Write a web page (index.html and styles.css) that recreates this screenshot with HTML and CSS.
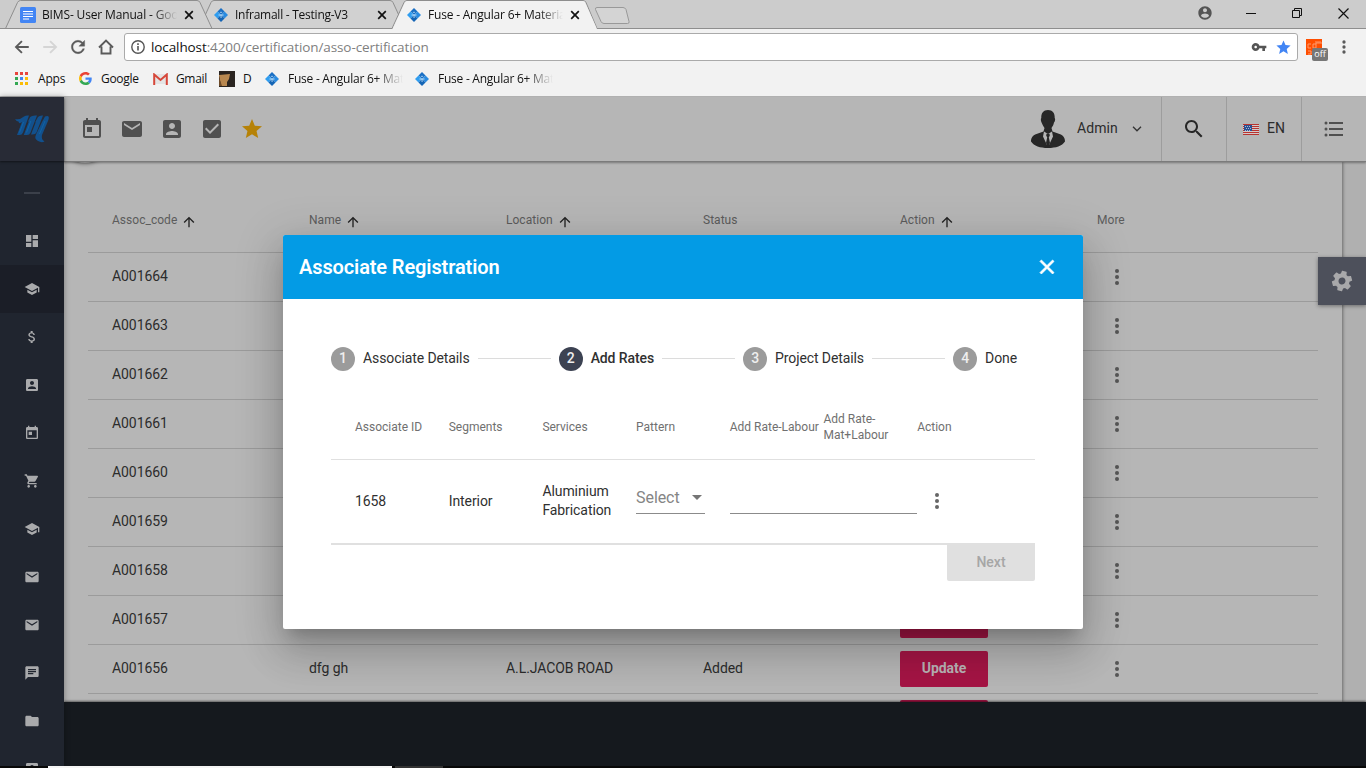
FILE: index.html
```html
<!DOCTYPE html>
<html lang="en">
<head>
<meta charset="utf-8">
<title>Fuse - Angular 6+ Material</title>
<link rel="stylesheet" href="styles.css">
</head>
<body>
<svg class="defs" width="0" height="0">
  <symbol id="today" viewBox="0 0 24 24"><path d="M19 3h-1V1h-2v2H8V1H6v2H5c-1.11 0-1.99.9-1.99 2L3 19c0 1.1.89 2 2 2h14c1.1 0 2-.9 2-2V5c0-1.1-.9-2-2-2zm0 16H5V8h14v11zM7 10h5v5H7z"/></symbol>
  <symbol id="mail" viewBox="0 0 24 24"><path d="M20 4H4c-1.1 0-1.99.9-1.99 2L2 18c0 1.1.9 2 2 2h16c1.1 0 2-.9 2-2V6c0-1.1-.9-2-2-2zm0 4l-8 5-8-5V6l8 5 8-5v2z"/></symbol>
  <symbol id="account" viewBox="0 0 24 24"><path d="M3 5v14c0 1.1.89 2 2 2h14c1.1 0 2-.9 2-2V5c0-1.1-.9-2-2-2H5c-1.11 0-2 .9-2 2zm12 4c0 1.66-1.34 3-3 3s-3-1.34-3-3 1.34-3 3-3 3 1.34 3 3zm-9 8c0-2 4-3.1 6-3.1s6 1.1 6 3.1v1H6v-1z"/></symbol>
  <symbol id="check" viewBox="0 0 24 24"><path d="M19 3H5c-1.11 0-2 .9-2 2v14c0 1.1.89 2 2 2h14c1.11 0 2-.9 2-2V5c0-1.1-.89-2-2-2zm-9 14l-5-5 1.41-1.41L10 14.17l7.59-7.59L19 8l-9 9z"/></symbol>
  <symbol id="star" viewBox="0 0 24 24"><path d="M12 17.27L18.18 21l-1.64-7.03L22 9.24l-7.19-.61L12 2 9.19 8.63 2 9.24l5.46 4.73L5.82 21z"/></symbol>
  <symbol id="search" viewBox="0 0 24 24"><path d="M15.5 14h-.79l-.28-.27C15.41 12.59 16 11.11 16 9.5 16 5.91 13.09 3 9.5 3S3 5.91 3 9.5 5.91 16 9.5 16c1.61 0 3.09-.59 4.23-1.57l.27.28v.79l5 4.99L20.49 19l-4.99-5zm-6 0C7.01 14 5 11.99 5 9.5S7.01 5 9.5 5 14 7.01 14 9.5 11.99 14 9.5 14z"/></symbol>
  <symbol id="list" viewBox="0 0 24 24"><circle cx="4" cy="6" r="1.5"/><circle cx="4" cy="12" r="1.5"/><circle cx="4" cy="18" r="1.5"/><path d="M7 5h14v2H7zM7 11h14v2H7zM7 17h14v2H7z"/></symbol>
  <symbol id="gear" viewBox="0 0 24 24"><path d="M19.43 12.98c.04-.32.07-.64.07-.98s-.03-.66-.07-.98l2.11-1.65c.19-.15.24-.42.12-.64l-2-3.46c-.12-.22-.39-.3-.61-.22l-2.49 1c-.52-.4-1.08-.73-1.69-.98l-.38-2.65C14.46 2.18 14.25 2 14 2h-4c-.25 0-.46.18-.49.42l-.38 2.65c-.61.25-1.17.59-1.69.98l-2.49-1c-.23-.09-.49 0-.61.22l-2 3.46c-.13.22-.07.49.12.64l2.11 1.65c-.04.32-.07.65-.07.98s.03.66.07.98l-2.11 1.65c-.19.15-.24.42-.12.64l2 3.46c.12.22.39.3.61.22l2.49-1c.52.4 1.08.73 1.69.98l.38 2.65c.03.24.24.42.49.42h4c.25 0 .46-.18.49-.42l.38-2.65c.61-.25 1.17-.59 1.69-.98l2.49 1c.23.09.49 0 .61-.22l2-3.46c.12-.22.07-.49-.12-.64l-2.11-1.65zM12 15.5c-1.93 0-3.5-1.57-3.5-3.5s1.57-3.5 3.5-3.5 3.5 1.57 3.5 3.5-1.57 3.5-3.5 3.5z"/></symbol>
  <symbol id="dash" viewBox="0 0 24 24"><path d="M3 13h8V3H3v10zm0 8h8v-6H3v6zm10 0h8V11h-8v10zm0-18v6h8V3h-8z"/></symbol>
  <symbol id="school" viewBox="0 0 24 24"><path d="M5 13.18v4L12 21l7-3.82v-4L12 17l-7-3.82zM12 3L1 9l11 6 9-4.91V17h2V9L12 3z"/></symbol>
  <symbol id="money" viewBox="0 0 24 24"><path d="M11.8 10.9c-2.27-.59-3-1.2-3-2.15 0-1.09 1.01-1.85 2.7-1.85 1.78 0 2.44.85 2.5 2.1h2.21c-.07-1.72-1.12-3.3-3.21-3.81V3h-3v2.16c-1.94.42-3.5 1.68-3.5 3.61 0 2.31 1.91 3.46 4.7 4.13 2.5.6 3 1.48 3 2.41 0 .69-.49 1.79-2.7 1.79-2.06 0-2.87-.92-2.98-2.1h-2.2c.12 2.19 1.76 3.42 3.68 3.83V21h3v-2.15c1.95-.37 3.5-1.5 3.5-3.55 0-2.84-2.43-3.81-4.7-4.4z"/></symbol>
  <symbol id="cart" viewBox="0 0 24 24"><path d="M7 18c-1.1 0-1.99.9-1.99 2S5.9 22 7 22s2-.9 2-2-.9-2-2-2zM1 2v2h2l3.6 7.59-1.35 2.45c-.16.28-.25.61-.25.96 0 1.1.9 2 2 2h12v-2H7.42c-.14 0-.25-.11-.25-.25l.03-.12.9-1.63h7.45c.75 0 1.41-.41 1.75-1.03l3.58-6.49c.08-.14.12-.31.12-.48 0-.55-.45-1-1-1H5.21l-.94-2H1zm16 16c-1.1 0-1.99.9-1.99 2s.89 2 1.99 2 2-.9 2-2-.9-2-2-2z"/></symbol>
  <symbol id="chat" viewBox="0 0 24 24"><path d="M20 2H4c-1.1 0-1.99.9-1.99 2L2 22l4-4h14c1.1 0 2-.9 2-2V4c0-1.1-.9-2-2-2zM6 9h12v2H6V9zm8 5H6v-2h8v2zm4-6H6V6h12v2z"/></symbol>
  <symbol id="folder" viewBox="0 0 24 24"><path d="M10 4H4c-1.1 0-1.99.9-1.99 2L2 18c0 1.1.9 2 2 2h16c1.1 0 2-.9 2-2V8c0-1.1-.9-2-2-2h-8l-2-2z"/></symbol>
  <symbol id="up" viewBox="0 0 24 24"><path d="M4 12l1.41 1.41L11 7.83V20h2V7.83l5.58 5.59L20 12l-8-8-8 8z"/></symbol>
  <symbol id="close" viewBox="0 0 24 24"><path d="M19 6.41L17.59 5 12 10.59 6.41 5 5 6.41 10.59 12 5 17.59 6.41 19 12 13.41 17.59 19 19 17.59 13.41 12z"/></symbol>
  <symbol id="dots" viewBox="0 0 24 24"><circle cx="12" cy="6" r="2"/><circle cx="12" cy="12" r="2"/><circle cx="12" cy="18" r="2"/></symbol>
  <symbol id="key" viewBox="0 0 24 24"><path d="M12.65 10C11.83 7.67 9.61 6 7 6c-3.31 0-6 2.69-6 6s2.69 6 6 6c2.61 0 4.83-1.67 5.65-4H17v4h4v-4h2v-4H12.65zM7 14c-1.1 0-2-.9-2-2s.9-2 2-2 2 .9 2 2-.9 2-2 2z"/></symbol>
  <symbol id="person" viewBox="0 0 24 24"><path d="M12 2C6.48 2 2 6.48 2 12s4.48 10 10 10 10-4.48 10-10S17.52 2 12 2zm0 3c1.66 0 3 1.34 3 3s-1.34 3-3 3-3-1.34-3-3 1.34-3 3-3zm0 14.2c-2.5 0-4.71-1.28-6-3.22.03-1.99 4-3.08 6-3.08 1.99 0 5.97 1.09 6 3.08-1.29 1.94-3.5 3.22-6 3.22z"/></symbol>
  <symbol id="back" viewBox="0 0 24 24"><path d="M21 10.8H7L12.8 5 11 3.200 2.200 12 11 20.800 12.800 19 7 13.200H21z"/></symbol>
  <symbol id="reload" viewBox="0 0 24 24"><path d="M17.65 6.35C16.2 4.9 14.21 4 12 4c-4.42 0-7.99 3.58-7.99 8s3.57 8 7.99 8c3.73 0 6.84-2.55 7.73-6h-2.080c-.82 2.330-3.040 4-5.650 4-3.310 0-6-2.690-6-6s2.690-6 6-6c1.660 0 3.140.69 4.220 1.780L13 11h7V4l-2.350 2.350z"/></symbol>
  <symbol id="fuse" viewBox="0 0 14 14"><path fill="#1a6fc4" d="M7 0l3.500 3.500L7 7 3.500 3.500z"/><path fill="#2f9df0" d="M3.500 3.500L7 7l-3.500 3.500L0 7z"/><path fill="#2a8be0" d="M10.500 3.500L14 7l-3.500 3.500L7 7z"/><path fill="#1565b5" d="M7 7l3.500 3.500L7 14l-3.500-3.500z"/><path fill="#b9dcf7" d="M7 3.400l1.400 1.400H5.600zM4.500 6.500h5v.9h-5zM6.600 7.400h.9v2.600h-.9z"/></symbol>
  <symbol id="xs" viewBox="0 0 10 10"><path d="M1.200 1.200l7.600 7.600M8.800 1.200L1.200 8.800" fill="none" stroke="#111" stroke-width="1.700"/></symbol>
</svg>

<header class="browser">
  <div class="tabstrip">
    <svg class="tab-shapes" width="640" height="29">
      <path d="M199 28.500L211 2.500Q212 .5 214 .5H390Q392 .5 393 2.500L405 28.500" fill="#d1d1d1" stroke="#8e8e8e"/>
      <path d="M5.500 28.500L17.500 2.500Q18.500 .5 20.500 .5H197Q199 .5 200 2.500L212 28.500" fill="#d1d1d1" stroke="#8e8e8e"/>
      <path d="M0 28.500H392L404 2.500Q405 .5 407 .5H583Q585 .5 586 2.500L597 28.500H640" fill="none" stroke="#8e8e8e"/>
      <path d="M392.500 29L404.500 3Q405.500 1 407 1H583Q585 1 585.500 3L597 29z" fill="#f2f2f2"/>
      <path d="M597 7.500H623Q625 7.500 626 9.500L629 21.500Q629.500 23.500 627.500 23.500H604Q602 23.500 601 21.500L595.500 9.500Q595 7.500 597 7.500z" fill="#d4d4d4" stroke="#999"/>
    </svg>
    <div class="tabs">
      <div class="tab">
        <svg class="favicon" width="16" height="16"><rect width="16" height="16" rx="1.500" fill="#4285f4"/><path d="M3 4.500h10M3 7h10M3 9.500h10M3 12h6" stroke="#fff" stroke-width="1.200"/></svg>
        <span class="tab-title t1">BIMS- User Manual - Google</span><svg class="x"><use href="#xs"/></svg>
      </div>
      <div class="tab">
        <svg class="favicon fuse"><use href="#fuse"/></svg>
        <span class="tab-title t2">Inframall - Testing-V3</span><svg class="x"><use href="#xs"/></svg>
      </div>
      <div class="tab">
        <svg class="favicon fuse"><use href="#fuse"/></svg>
        <span class="tab-title t3">Fuse - Angular 6+ Material</span><svg class="x"><use href="#xs"/></svg>
      </div>
    </div>
    <div class="window-buttons">
      <svg class="profile"><use href="#person"/></svg>
      <svg width="10" height="10"><path d="M0 5.500h10" stroke="#111"/></svg>
      <svg width="10" height="10" fill="none" stroke="#111"><path d="M.5 2.500h7v7h-7zM2.500 2.500V.5h7v7h-2"/></svg>
      <svg width="11" height="11"><path d="M.5.5l10 10M10.500.5l-10 10" stroke="#111" stroke-width="1.200"/></svg>
    </div>
  </div>
  <div class="navbar">
    <svg class="nav-icon"><use href="#back"/></svg>
    <svg class="nav-icon forward"><use href="#back"/></svg>
    <svg class="nav-icon reload"><use href="#reload"/></svg>
    <svg class="home" width="16" height="16" viewBox="0 0 16 16"><path d="M1 8.500L8 1.500l7 7M3.500 7.500v7h9v-7" fill="none" stroke="#5a5a5a" stroke-width="1.900"/></svg>
    <div class="omnibox">
      <svg width="14" height="14"><circle cx="7" cy="7" r="6.200" fill="none" stroke="#555" stroke-width="1.400"/><path d="M7 6v4.500M7 3.300v1.600" stroke="#555" stroke-width="1.600"/></svg>
      <span class="url"><b>localhost</b>:4200/certification/asso-certification</span>
      <svg class="key"><use href="#key"/></svg>
      <svg class="bookmark-star"><use href="#star"/></svg>
    </div>
    <div class="extension">
      <svg width="16" height="16"><rect width="16" height="16" fill="#ff4e00"/><path d="M5 5H2v4h3M10 5H7v4h3V2M11 5V3h2v2m0-2h2v2M2 12h3v3H2M7 11v4" fill="none" stroke="#ff9a6c"/></svg>
      <span class="off">off</span>
    </div>
    <svg class="menu"><use href="#dots"/></svg>
  </div>
  <div class="bookmarks">
    <div class="bm apps"><svg width="14" height="14"><g fill="#e8453c"><path d="M0 0h3v3H0zM5 0h3v3H5zM10 0h3v3h-3z"/></g><path fill="#34a853" d="M0 5h3v3H0zM0 10h3v3H0z"/><path fill="#4285f4" d="M5 5h3v3H5z"/><path fill="#fbbc05" d="M10 5h3v3h-3zM5 10h3v3H5zM10 10h3v3h-3z"/></svg><span>Apps</span></div>
    <div class="bm google"><svg width="13" height="13" viewBox="0 0 48 48"><path fill="#EA4335" d="M24 9.500c3.540 0 6.710 1.220 9.210 3.600l6.850-6.850C35.900 2.380 30.470 0 24 0 14.620 0 6.510 5.380 2.560 13.220l7.980 6.190C12.430 13.720 17.740 9.500 24 9.500z"/><path fill="#4285F4" d="M46.980 24.550c0-1.570-.15-3.090-.38-4.550H24v9.020h12.940c-.58 2.960-2.260 5.480-4.780 7.180l7.730 6c4.510-4.180 7.090-10.360 7.090-17.650z"/><path fill="#FBBC05" d="M10.530 28.590c-.48-1.450-.76-2.990-.76-4.590s.27-3.140.76-4.590l-7.980-6.190C.92 16.460 0 20.120 0 24s.92 7.540 2.560 10.780l7.970-6.190z"/><path fill="#34A853" d="M24 48c6.480 0 11.930-2.130 15.890-5.810l-7.730-6c-2.150 1.450-4.920 2.300-8.160 2.300-6.260 0-11.570-4.220-13.470-9.910l-7.980 6.190C6.510 42.620 14.620 48 24 48z"/></svg><span>Google</span></div>
    <div class="bm gmail"><svg width="15" height="12" viewBox="0 0 15 12"><path fill="#e4e4e4" d="M2 1h11v10H2z"/><path fill="none" stroke="#d6473a" stroke-width="2" d="M1.200 12V1.500L7.500 7l6.300-5.500V12"/></svg><span>Gmail</span></div>
    <div class="bm d"><svg width="16" height="16"><path fill="#2a2420" d="M0 0h16v16H0z"/><path fill="#b98850" d="M0 4l11-1-1 5-2 3 0 4H2z"/><path fill="#6d4a28" d="M0 6l3 9H0z"/></svg><span>D</span></div>
    <div class="bm fz"><svg class="fuse"><use href="#fuse"/></svg><span>Fuse - Angular 6+ Mate</span></div>
    <div class="bm fz"><svg class="fuse"><use href="#fuse"/></svg><span>Fuse - Angular 6+ Mate</span></div>
  </div>
</header>

<div class="app">
  <aside class="sidebar">
    <div class="logo"><svg width="36" height="30" viewBox="0 0 36 30" fill="#12508c"><path d="M1 5Q6 6 10 2.500Q12 1 15 1.500L9 18.500Q8 21 5.500 21H3L8 8Q5 10.500 4.500 7.500Q2.500 7.500 1 5z"/><path d="M13.500 8.500L16.200 3Q18 1 23 1.500L16.500 18.500Q15.500 21 13 21H9.800L15 7z"/><path d="M21 8.500L24 3Q25.500 1.200 29 1.500L22.500 18.500Q21.500 21 17 20.500L21.800 8z"/><path d="M28 8L31 2.500Q34 1.500 34.800 3Q35 5 34 7L28 21Q27 25.500 30.500 27.500Q27.500 29 24 27Q20 25 22 20.500z"/><path d="M9.500 8L5.500 18.500M16.800 7L12.500 18.500M31 7L25.500 20" fill="none" stroke="#0c6bb2" stroke-width=".7"/></svg></div>
    <nav class="side-nav">
      <i class="group-dash"></i>
      <div class="side-items">
        <a class="side-item"><svg><use href="#dash"/></svg></a>
        <a class="side-item active"><svg><use href="#school"/></svg></a>
        <a class="side-item"><svg><use href="#money"/></svg></a>
        <a class="side-item"><svg><use href="#account"/></svg></a>
        <a class="side-item"><svg><use href="#today"/></svg></a>
        <a class="side-item"><svg><use href="#cart"/></svg></a>
        <a class="side-item"><svg><use href="#school"/></svg></a>
        <a class="side-item"><svg><use href="#mail"/></svg></a>
        <a class="side-item"><svg><use href="#mail"/></svg></a>
        <a class="side-item"><svg><use href="#chat"/></svg></a>
        <a class="side-item"><svg><use href="#folder"/></svg></a>
        <a class="side-item"><svg><use href="#account"/></svg></a>
      </div>
    </nav>
  </aside>
  <div class="main">
    <div class="toolbar">
      <div class="shortcuts">
        <svg><use href="#today"/></svg><svg><use href="#mail"/></svg><svg><use href="#account"/></svg><svg><use href="#check"/></svg><svg class="gold"><use href="#star"/></svg>
      </div>
      <div class="user">
        <svg width="34" height="38" viewBox="0 0 34 38"><path fill="#272727" d="M17 0C21.500 0 24 3 23.700 8c.8.500.5 3.500-.7 4.500-.5 2.500-1.500 4-2.500 5.500l1 3.500 7 2.500c4 1.500 5.500 4 5.500 7.500-3 4.500-9 6.500-17 6.500S3 36 0 31.500C0 28 1.500 25.500 5.500 24l7-2.500 1-3.500c-1-1.500-2-3-2.500-4.500-1.200-2-1.500-5-.7-5.500C10 3 12.500 0 17 0z"/><path fill="#b6b6b6" d="M13 21.500l4 2.500 4-2.500 1 5L18 35h-2l-4-8.500z"/><path fill="#272727" d="M15.500 23.700h3l.3 2-1 1.500L19 33l-2 4-2-4 1.200-5.800-1-1.500z"/></svg>
        <span>Admin</span>
        <svg class="chev" width="10" height="6"><path d="M1 .8l4 4 4-4" fill="none" stroke="#333" stroke-width="1.300"/></svg>
      </div>
      <div class="tool search"><svg><use href="#search"/></svg></div>
      <div class="tool lang"><svg width="16" height="11"><path fill="#d4c9c9" d="M0 0h16v11H0z"/><path stroke="#b8332f" d="M0 .5h16M0 2.500h16M0 4.500h16M0 6.500h16M0 8.500h16M0 10.500h16"/><path fill="#2a4f92" d="M1 1h8v6H1z"/><path stroke="#a9b8d4" stroke-dasharray="1 1" d="M2 2.500h6M3 4.500h5M2 6.500h6"/></svg><span>EN</span></div>
      <div class="tool quick"><svg><use href="#list"/></svg></div>
    </div>
    <main class="content">
      <div class="round-shadow"></div>
      <div class="card">
        <div class="row head"><span>Assoc_code<svg><use href="#up"/></svg></span><span>Name<svg><use href="#up"/></svg></span><span>Location<svg><use href="#up"/></svg></span><span>Status</span><span>Action<svg><use href="#up"/></svg></span><span>More</span></div>
        <div class="row"><span>A001664</span><span></span><span></span><span></span><span><b class="update"></b></span><span><svg><use href="#dots"/></svg></span></div>
        <div class="row"><span>A001663</span><span></span><span></span><span></span><span><b class="update"></b></span><span><svg><use href="#dots"/></svg></span></div>
        <div class="row"><span>A001662</span><span></span><span></span><span></span><span><b class="update"></b></span><span><svg><use href="#dots"/></svg></span></div>
        <div class="row"><span>A001661</span><span></span><span></span><span></span><span><b class="update"></b></span><span><svg><use href="#dots"/></svg></span></div>
        <div class="row"><span>A001660</span><span></span><span></span><span></span><span><b class="update"></b></span><span><svg><use href="#dots"/></svg></span></div>
        <div class="row"><span>A001659</span><span></span><span></span><span></span><span><b class="update"></b></span><span><svg><use href="#dots"/></svg></span></div>
        <div class="row"><span>A001658</span><span></span><span></span><span></span><span><b class="update"></b></span><span><svg><use href="#dots"/></svg></span></div>
        <div class="row"><span>A001657</span><span></span><span></span><span></span><span><b class="update"></b></span><span><svg><use href="#dots"/></svg></span></div>
        <div class="row"><span>A001656</span><span>dfg gh</span><span>A.L.JACOB ROAD</span><span>Added</span><span><b class="update">Update</b></span><span><svg><use href="#dots"/></svg></span></div>
        <div class="row"><span></span><span></span><span></span><span></span><span><b class="update"></b></span><span></span></div>
      </div>
    </main>
    <footer class="footer"></footer>
  </div>
</div>
<div class="taskbar"><i class="task-main"></i><i class="task-next"></i></div>

<button class="settings"><svg><use href="#gear"/></svg></button>

<section class="dialog">
  <div class="dialog-head"><h2>Associate Registration</h2><svg><use href="#close"/></svg></div>
  <div class="dialog-body">
    <div class="stepper">
      <span class="num">1</span><span>Associate Details</span><i></i>
      <span class="num on">2</span><span class="current">Add Rates</span><i></i>
      <span class="num">3</span><span>Project Details</span><i></i>
      <span class="num">4</span><span>Done</span>
    </div>
    <div class="rates rates-head"><span>Associate ID</span><span>Segments</span><span>Services</span><span>Pattern</span><span class="nowrap">Add Rate-Labour</span><span>Add Rate-Mat+Labour</span><span>Action</span></div>
    <div class="rates rates-row"><span>1658</span><span>Interior</span><span class="service">Aluminium Fabrication</span><span class="select">Select<i></i></span><span class="input"></span><span class="more"><svg><use href="#dots"/></svg></span></div>
    <div class="actions"><button class="next">Next</button></div>
  </div>
</section>
</body>
</html>
```

FILE: styles.css
```css
* { box-sizing: border-box; }
body { margin: 0; width: 1366px; height: 768px; overflow: hidden; position: relative; font-family: Roboto, sans-serif; font-size: 14px; color: #2c2c2c; background: #b6b6b6; display: flex; flex-direction: column; }
svg { display: block; flex: none; }
.defs { position: absolute; }

/* Browser chrome */
.browser { height: 96px; flex: none; background: #f2f2f2; font-family: "Open Sans", sans-serif; font-size: 12px; color: #111; }
.tabstrip { height: 29px; background: #ccc; border-bottom: 1px solid #8e8e8e; position: relative; display: flex; justify-content: space-between; }
.tab-shapes { position: absolute; left: 0; top: 0; }
.tabs { position: relative; display: flex; padding-left: 20px; }
.tab { width: 193px; height: 29px; display: flex; align-items: center; }
.favicon { margin-right: 6px; }
.fuse { width: 14px; height: 14px; }
.favicon.fuse { margin: 0 7px 0 1px; }
.tab-title { width: 135px; overflow: hidden; white-space: nowrap; margin-right: 7px; -webkit-mask-image: linear-gradient(90deg, #000 82%, transparent); mask-image: linear-gradient(90deg, #000 82%, transparent); }
.t1 { letter-spacing: -.15px; }
.t2 { letter-spacing: -.25px; }
.t3 { letter-spacing: -.2px; }
.x { width: 10px; height: 10px; }
.window-buttons { position: relative; display: flex; align-items: center; padding: 0 17px 2px 0; }
.window-buttons svg { margin-left: 36px; }
.profile { width: 16px; height: 16px; fill: #555; margin-right: -3px; }
.navbar { height: 36px; display: flex; align-items: center; padding-left: 13px; }
.nav-icon { width: 18px; height: 18px; fill: #5a5a5a; margin-right: 10px; }
.forward { transform: scaleX(-1); fill: #d5d5d5; }
.reload { width: 20px; height: 20px; margin: 0 9px 0 -1px; stroke: #5a5a5a; stroke-width: .4; }
.home { margin: 0 10px 0 1px; }
.omnibox { width: 1174px; height: 28px; border: 1px solid #aaa; border-radius: 3px; background: #fff; display: flex; align-items: center; padding: 0 6px; }
.url { flex: 1; margin-left: 6px; color: #808080; font-size: 13.5px; letter-spacing: -.1px; white-space: nowrap; }
.url b { font-weight: 400; color: #111; }
.key { width: 16px; height: 16px; fill: #555; margin-right: 8px; }
.bookmark-star { width: 17px; height: 17px; fill: #4285f4; margin-right: -1px; }
.extension { position: relative; margin-left: 8px; width: 22px; height: 16px; }
.off { position: absolute; left: 6px; top: 9px; width: 16px; height: 13px; border-radius: 2px; background: #777; color: #fff; font-size: 9px; line-height: 12px; text-align: center; }
.menu { width: 20px; height: 20px; fill: #5a5a5a; margin-left: 6px; }
.bookmarks { display: flex; padding-left: 15px; height: 27px; align-items: center; }
.bm { display: flex; align-items: center; white-space: nowrap; }
.bm.apps { width: 64px; gap: 9px; letter-spacing: -.2px; }
.bm.google { width: 74px; gap: 9px; letter-spacing: -.3px; }
.bm.gmail { width: 66px; gap: 8px; letter-spacing: -.35px; }
.bm.d { width: 46px; gap: 8px; }
.bm.fz { width: 150px; gap: 9px; letter-spacing: -.25px; }
.bm.fz span { width: 115px; overflow: hidden; -webkit-mask-image: linear-gradient(90deg, #000 76%, transparent); mask-image: linear-gradient(90deg, #000 76%, transparent); }

/* Application shell */
.app { flex: 1; display: flex; min-height: 0; padding-top: 1px; }
.sidebar { width: 64px; background: #20252f; box-shadow: 0 0 6px rgba(0,0,0,.35); position: relative; z-index: 2; display: flex; flex-direction: column; }
.logo { height: 64px; flex: none; display: flex; align-items: center; justify-content: center; background: #282b36; box-shadow: 0 1px 2px rgba(0,0,0,.5); }
.side-nav { flex: 1; min-height: 0; overflow: hidden; padding-top: 31px; }
.group-dash { display: block; width: 16px; height: 2px; margin: 0 auto 23px; background: #3b404a; }
.side-item { display: flex; height: 48px; align-items: center; justify-content: center; }
.side-item svg { width: 16px; height: 16px; fill: #a9aaac; }
.side-item.active { background: #1b1e27; }
.main { flex: 1; display: flex; flex-direction: column; min-width: 0; }
.toolbar { height: 65px; flex: none; display: flex; background: #b6b6b6; border-bottom: 1px solid #7b7b7b; box-shadow: 0 1px 2px rgba(0,0,0,.35); position: relative; z-index: 1; }
.shortcuts { flex: 1; display: flex; align-items: center; gap: 16px; padding-left: 16px; }
.shortcuts svg { width: 24px; height: 24px; fill: #505050; }
.shortcuts .gold { fill: #b68207; }
.user { display: flex; align-items: center; width: 130px; gap: 12px; }
.user span { width: 41px; padding-bottom: 2px; letter-spacing: .1px; }
.chev { margin-left: 2px; }
.tool { display: flex; align-items: center; justify-content: center; border-left: 1px solid #9d9d9d; }
.tool svg { width: 24px; height: 24px; fill: #272727; }
.search { width: 65px; }
.lang { width: 75px; gap: 8px; }
.lang svg { width: 16px; height: 11px; }
.lang span { padding-bottom: 2px; }
.quick { width: 65px; }
.quick svg { fill: #505050; }
.content { flex: 1; min-height: 0; overflow: hidden; background: #b0b0b0; padding-right: 24px; position: relative; }
.round-shadow { position: absolute; left: 8px; top: -12px; width: 26px; height: 13px; border-radius: 50%; background: #8a8a8a; box-shadow: 0 0 5px 0 rgba(0,0,0,.6); z-index: 1; }
.card { height: 100%; background: #b6b6b6; box-shadow: 1px 0 3px rgba(0,0,0,.4); padding: 25px 24px 0; }
.row { height: 49px; border-bottom: 1px solid #9b9b9b; padding: 0 24px; display: grid; grid-template-columns: repeat(6, 197px); align-items: center; letter-spacing: -.07px; }
.row > span { display: flex; align-items: center; height: 48px; padding-bottom: 2px; }
.row > span > svg { width: 24px; height: 24px; margin: 2px 0 0 8px; fill: #555; }
.row.head { height: 66px; color: #5c5c5c; font-size: 12px; letter-spacing: .03px; }
.row.head > span { padding-bottom: 0; }
.row.head > span > svg { width: 16px; height: 16px; fill: #222; margin: 4px 0 0 4px; }
.update { width: 88px; height: 36px; margin-top: 2px; border-radius: 2px; background: #a51545; color: #b9b3b5; text-align: center; line-height: 35px; font-weight: 700; }
.footer { height: 64px; flex: none; background: #15191e; box-shadow: 0 -1px 2px rgba(0,0,0,.5); position: relative; }
.taskbar { height: 2px; flex: none; background: #080808; display: flex; padding-left: 48px; position: relative; z-index: 3; }
.task-main { width: 344px; background: #f5f5f5; }
.task-next { width: 48px; margin-left: 3px; background: #333; }
.settings { position: absolute; right: 0; top: 257px; width: 48px; height: 48px; border: 0; padding: 0; background: #4d505b; display: flex; align-items: center; justify-content: center; box-shadow: 0 1px 4px rgba(0,0,0,.4); }
.settings svg { width: 24px; height: 24px; fill: #a8a8aa; transform: rotate(14deg); }

/* Registration dialog */
.dialog { position: absolute; left: 283px; top: 235px; width: 800px; height: 394px; background: #fff; border-radius: 2px; overflow: hidden; z-index: 5; box-shadow: 0 11px 15px -7px rgba(0,0,0,.2), 0 24px 38px 3px rgba(0,0,0,.14), 0 9px 46px 8px rgba(0,0,0,.12); color: #303030; }
.dialog-head { height: 64px; background: #039be5; color: #fff; display: flex; align-items: center; justify-content: space-between; padding: 0 24px 0 16px; }
.dialog-head h2 { margin: 0; font-size: 20px; font-weight: 600; letter-spacing: -.12px; }
.dialog-head svg { width: 24px; height: 24px; fill: #fff; stroke: #fff; stroke-width: .8; }
.dialog-body { padding: 48px 48px 0; }
.stepper { width: 686px; height: 24px; display: flex; align-items: center; gap: 8px; margin-bottom: 24px; white-space: nowrap; letter-spacing: -.1px; }
.stepper > span:not(.num) { padding-bottom: 2px; }
.num { width: 24px; height: 24px; border-radius: 50%; background: #9b9b9b; color: #eee; text-align: center; line-height: 23px; font-weight: 500; }
.num.on { background: #3c4252; }
.current { font-weight: 500; }
.stepper i { flex: 1; height: 1px; background: #dcdcdc; margin-bottom: 1px; }
.rates { display: grid; grid-template-columns: repeat(7, 93.7px); padding: 0 24px; align-items: center; }
.rates-head { height: 65px; border-bottom: 1px solid #e0e0e0; font-size: 12px; letter-spacing: 0; line-height: 16px; color: #707070; }
.nowrap { white-space: nowrap; }
.rates-row { height: 85px; border-bottom: 2px solid #e0e0e0; line-height: 19px; letter-spacing: -.08px; }
.service { padding-bottom: 2px; }
.select { width: 69px; height: 32px; margin-bottom: 8px; border-bottom: 1px solid #8b8b8b; font-size: 16px; line-height: 31px; color: #858585; display: flex; align-items: center; justify-content: space-between; padding-right: 3px; }
.select i { border: 5px solid transparent; border-top-color: #757575; border-bottom: 0; }
.input { grid-column: span 2; height: 32px; margin-bottom: 8px; border-bottom: 1px solid #8b8b8b; }
.more svg { width: 24px; height: 24px; margin: 0 0 2px 8px; fill: #666; }
.actions { display: flex; justify-content: flex-end; }
.next { width: 88px; height: 38px; margin-top: -2px; border: 0; border-radius: 2px; background: #e0e0e0; color: #a6a6a6; font: 500 14px Roboto, sans-serif; }
```
